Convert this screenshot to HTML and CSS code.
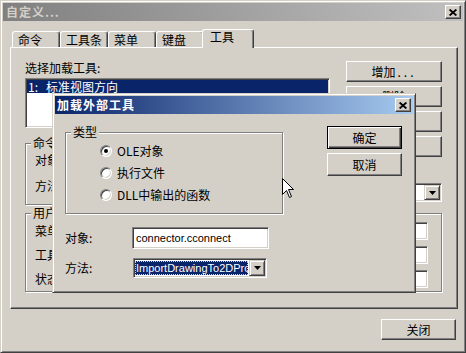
FILE: index.html
```html
<!DOCTYPE html>
<html>
<head>
<meta charset="utf-8">
<title>自定义</title>
<link rel="stylesheet" href="styles.css">
</head>
<body>
<div class="win">
  <div class="titlebar inactive">
    <span class="ttl">自定义...</span>
    <span class="xbtn"><svg width="8" height="7" viewBox="0 0 8 7"><path d="M0.6 0.5 L7.4 6.5 M7.4 0.5 L0.6 6.5" stroke="#000" stroke-width="1.8" fill="none"/></svg></span>
  </div>
  <div class="main">
    <div class="tabs">
      <div class="tab">命令</div>
      <div class="tab">工具条</div>
      <div class="tab">菜单</div>
      <div class="tab">键盘</div>
      <div class="tab sel">工具</div>
    </div>
    <div class="panel">
      <div class="pgrid">
        <div class="lcol">
          <div class="lbl">选择加载工具:</div>
          <div class="listbox">
            <div class="item"><span class="num">1:</span>标准视图方向</div>
          </div>
          <div class="grp grp-cmd">
            <div class="glabel">命令</div>
            <div class="crow first">对象:</div>
            <div class="crow">方法:</div>
          </div>
        </div>
        <div class="rcol">
          <div class="btn">增加<span class="dots">...</span></div>
          <div class="btn">删除</div>
          <div class="btn">上移</div>
          <div class="btn">下移</div>
          <div class="combo cmb-main">
            <div class="cval blank"></div>
            <div class="carrow"><svg width="7" height="4" viewBox="0 0 7 4"><path d="M0 0H7L3.5 4Z" fill="#000"/></svg></div>
          </div>
        </div>
        <div class="grp grp-user">
          <div class="glabel">用户</div>
          <div class="urow first"><span>菜单:</span><div class="edit"></div></div>
          <div class="urow"><span>工具:</span><div class="edit"></div></div>
          <div class="urow"><span>状态:</span><div class="edit"></div></div>
        </div>
      </div>
    </div>
    <div class="foot"><div class="btn btn-close">关闭</div></div>
  </div>

  <div class="dialog">
    <div class="titlebar active">
      <span class="ttl dttl">加载外部工具</span>
      <span class="xbtn"><svg width="8" height="7" viewBox="0 0 8 7"><path d="M0.6 0.5 L7.4 6.5 M7.4 0.5 L0.6 6.5" stroke="#000" stroke-width="1.8" fill="none"/></svg></span>
    </div>
    <div class="dbody">
      <div class="dleft">
        <div class="grp grp-type">
          <div class="glabel">类型</div>
          <div class="radio-row first"><span class="radio on"></span><span>OLE对象</span></div>
          <div class="radio-row"><span class="radio"></span><span>执行文件</span></div>
          <div class="radio-row"><span class="radio"></span><span>DLL中输出的函数</span></div>
        </div>
        <div class="frow obj">
          <span class="flabel">对象:</span>
          <div class="textbox">connector.cconnect</div>
        </div>
        <div class="frow meth">
          <span class="flabel">方法:</span>
          <div class="combo cmb-dlg">
            <div class="cval">ImportDrawingTo2DProf</div>
            <div class="carrow"><svg width="7" height="4" viewBox="0 0 7 4"><path d="M0 0H7L3.5 4Z" fill="#000"/></svg></div>
          </div>
        </div>
      </div>
      <div class="dright">
        <div class="btn btn-def">确定</div>
        <div class="btn btn-dlg">取消</div>
      </div>
    </div>
  </div>

  <svg class="cursor" width="13" height="21" viewBox="0 0 13 21"><path d="M0.5 0.5 V16.5 L4.5 12.5 L7.5 19.5 L9.5 18.5 L6.5 11.5 H11.5 Z" fill="#fff" stroke="#000" stroke-width="1" stroke-linejoin="miter"/></svg>
</div>
</body>
</html>
```

FILE: styles.css
```css
* { box-sizing: border-box; }

body {
  margin: 0;
  background: #d4d0c8;
  font-family: "Noto Sans CJK SC", "Liberation Sans", sans-serif;
  font-size: 12px;
  line-height: 14px;
  color: #000;
}

.win {
  position: relative;
  width: 466px;
  height: 353px;
  border: 1px solid;
  border-color: #d4d0c8 #404040 #404040 #d4d0c8;
  box-shadow: inset 1px 1px #fff, inset -1px -1px #808080;
  padding: 2px;
  background: #d4d0c8;
  display: flex;
  flex-direction: column;
  overflow: hidden;
}

/* title bars */
.titlebar {
  height: 18px;
  flex-shrink: 0;
  display: flex;
  align-items: center;
  justify-content: space-between;
  padding-left: 3px;
}
.titlebar.inactive {
  background: linear-gradient(to right, #808080, #c0c0c0);
  color: #d4d0c8;
}
.titlebar.active {
  background: linear-gradient(to right, #0a246a, #a6caf0);
  color: #fff;
  padding-left: 2px;
}
.ttl {
  font-weight: bold;
  font-size: 12px;
  line-height: 14px;
  letter-spacing: 1px;
}
.xbtn {
  width: 16px;
  height: 14px;
  margin-right: 2px;
  background: #d4d0c8;
  border: 1px solid;
  border-color: #fff #404040 #404040 #fff;
  box-shadow: inset -1px -1px #808080;
  display: flex;
  align-items: center;
  justify-content: center;
}

/* main area */
.main {
  padding: 0 5px 0 7px;
  display: flex;
  flex-direction: column;
}
.tabs {
  margin-top: 6px;
  height: 20px;
  display: flex;
  align-items: flex-end;
  padding-left: 2px;
}
.tab {
  width: 48px;
  height: 16px;
  padding: 1px 0 0 5px;
  border: 1px solid;
  border-bottom: none;
  border-color: #fff #404040 #404040 #fff;
  border-radius: 3px 3px 0 0;
  box-shadow: inset -1px 0 #808080;
  background: #d4d0c8;
  white-space: nowrap;
}
.tab.sel {
  position: relative;
  z-index: 1;
  width: 52px;
  height: 19px;
  margin: 0 -2px -1px -2px;
  padding: 0 0 0 7px;
}

.panel {
  height: 262px;
  border: 1px solid;
  border-color: #fff #404040 #404040 #fff;
  box-shadow: inset -1px -1px #808080;
  padding: 13px 15px 0 14px;
}
.pgrid {
  display: grid;
  grid-template-columns: 305px 96px;
  column-gap: 16px;
}
.lcol, .rcol {
  display: flex;
  flex-direction: column;
}
.lbl { height: 14px; }
.listbox {
  margin-top: 3px;
  height: 50px;
  background: #fff;
  border: 1px solid;
  border-color: #808080 #fff #fff #808080;
  box-shadow: inset 1px 1px #404040, inset -1px -1px #d4d0c8;
  padding: 1px;
}
.item {
  height: 13px;
  line-height: 13px;
  background: #0a246a;
  color: #fff;
  padding-left: 1px;
  white-space: nowrap;
}
.num {
  display: inline-block;
  width: 18px;
}

/* group boxes */
.grp {
  border: 1px solid #808080;
  box-shadow: inset 1px 1px #fff, 1px 1px #fff;
  display: flex;
  flex-direction: column;
}
.glabel {
  align-self: flex-start;
  margin: -8px 0 0 5px;
  padding: 0 2px;
  background: #d4d0c8;
  line-height: 14px;
  white-space: nowrap;
}
.grp-cmd {
  margin-top: 15px;
  height: 62px;
}
.crow {
  padding-left: 9px;
  margin-top: 12px;
  white-space: nowrap;
}
.crow.first { margin-top: 3px; }

.grp-user {
  grid-column: 1 / -1;
  margin-top: 8px;
  padding: 0 13px 3px 9px;
}
.grp-user .glabel { margin-left: -4px; }
.urow {
  display: flex;
  justify-content: space-between;
  align-items: center;
  height: 18px;
  margin-top: 6px;
}
.urow.first { margin-top: 2px; }
.edit {
  width: 260px;
  height: 18px;
  background: #fff;
  border: 1px solid;
  border-color: #808080 #fff #fff #808080;
  box-shadow: inset 1px 1px #404040, inset -1px -1px #d4d0c8;
}

/* buttons */
.btn {
  background: #d4d0c8;
  border: 1px solid;
  border-color: #fff #404040 #404040 #fff;
  box-shadow: inset -1px -1px #808080;
  display: flex;
  align-items: center;
  justify-content: center;
  white-space: nowrap;
}
.rcol .btn {
  height: 21px;
  margin-bottom: 4px;
}
.dots { letter-spacing: 3px; margin-left: 2px; }

.combo {
  display: flex;
  height: 20px;
  background: #fff;
  border: 1px solid;
  border-color: #808080 #fff #fff #808080;
  box-shadow: inset 1px 1px #404040, inset -1px -1px #d4d0c8;
  padding: 1px;
}
.cmb-main {
  margin-top: 22px;
  height: 19px;
}
.cval {
  flex: 1;
  min-width: 0;
  overflow: hidden;
  white-space: nowrap;
}
.cval.blank { background: #fff; }
.carrow {
  width: 16px;
  background: #d4d0c8;
  border: 1px solid;
  border-color: #d4d0c8 #404040 #404040 #d4d0c8;
  box-shadow: inset 1px 1px #fff, inset -1px -1px #808080;
  display: flex;
  align-items: center;
  justify-content: center;
}

.foot {
  display: flex;
  justify-content: flex-end;
  padding-right: 2px;
  margin-top: 10px;
}
.btn-close {
  width: 75px;
  height: 21px;
}

/* overlaid dialog */
.dialog {
  position: absolute;
  left: 51px;
  top: 92px;
  width: 364px;
  height: 200px;
  background: #d4d0c8;
  border: 1px solid;
  border-color: #d4d0c8 #404040 #404040 #d4d0c8;
  box-shadow: inset 1px 1px #fff, inset -1px -1px #808080;
  padding: 2px;
  display: flex;
  flex-direction: column;
}
.dbody {
  display: flex;
  padding: 11px 10px 0 10px;
  gap: 44px;
}
.dleft {
  width: 218px;
  display: flex;
  flex-direction: column;
}
.grp-type {
  margin-top: 7px;
  padding: 0 0 7px 34px;
}
.grp-type .glabel { margin-left: -29px; }
.radio-row {
  height: 22px;
  display: flex;
  align-items: center;
  gap: 5px;
  white-space: nowrap;
}
.radio-row.first { margin-top: 1px; }
.radio {
  width: 12px;
  height: 12px;
  border-radius: 50%;
  background: #fff;
  border: 1px solid;
  border-color: #808080 #fff #fff #808080;
  box-shadow: inset 1px 1px #404040, inset -1px -1px #d4d0c8;
  display: flex;
  align-items: center;
  justify-content: center;
}
.radio.on::after {
  content: "";
  width: 4px;
  height: 4px;
  border-radius: 50%;
  background: #000;
}
.frow {
  display: flex;
  align-items: center;
}
.frow.obj { margin-top: 13px; }
.frow.meth { margin-top: 9px; }
.flabel { width: 67px; }
.textbox {
  width: 137px;
  height: 22px;
  background: #fff;
  border: 1px solid;
  border-color: #808080 #fff #fff #808080;
  box-shadow: inset 1px 1px #404040, inset -1px -1px #d4d0c8;
  padding: 2px 3px 0 3px;
  font-family: "Liberation Sans", Arial, sans-serif;
  font-size: 11px;
  line-height: 16px;
}
.cmb-dlg {
  width: 134px;
  margin-left: 1px;
}
.cmb-dlg .cval {
  margin: 1px 1px 1px 0;
  background: #0a246a;
  color: #fff;
  outline: 1px dotted #d4d0c8;
  outline-offset: -1px;
  padding-left: 1px;
  font-family: "Liberation Sans", Arial, sans-serif;
  font-size: 11px;
  line-height: 14px;
}
.dright {
  display: flex;
  flex-direction: column;
}
.btn-def {
  width: 75px;
  height: 23px;
  margin-top: 1px;
  border: 1px solid #000;
  box-shadow: inset 1px 1px #fff, inset -1px -1px #404040, inset -2px -2px #808080;
}
.btn-dlg {
  width: 75px;
  height: 23px;
  margin-top: 4px;
}

.cursor {
  position: absolute;
  left: 281px;
  top: 177px;
}
```
